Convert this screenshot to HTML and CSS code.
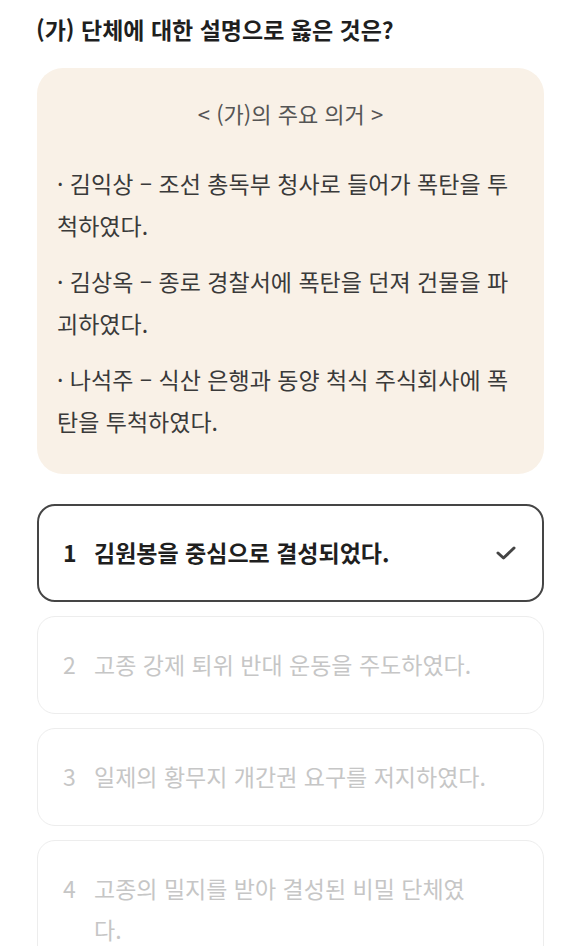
FILE: index.html
```html
<!DOCTYPE html>
<html lang="ko">
<head>
  <meta charset="UTF-8" />
  <meta name="viewport" content="width=device-width, initial-scale=1.0"/>
  <title>문제</title>
  <link rel="stylesheet" href="styles.css">
</head>
<body>
  <div class="quiz">
    <h2 class="question">(가) 단체에 대한 설명으로 옳은 것은?</h2>

    <div class="source">
      <p class="source-title">&lt; (가)의 주요 의거 &gt;</p>
      <p class="source-item">· 김익상 – 조선 총독부 청사로 들어가 폭탄을 투척하였다.</p>
      <p class="source-item">· 김상옥 – 종로 경찰서에 폭탄을 던져 건물을 파괴하였다.</p>
      <p class="source-item">· 나석주 – 식산 은행과 동양 척식 주식회사에 폭탄을 투척하였다.</p>
    </div>

    <ul class="options">
      <li class="option selected">
        <span class="num">1</span>
        <span class="text">김원봉을 중심으로 결성되었다.</span>
        <svg class="check" width="20" height="14" viewBox="0 0 20 14">
          <path d="M2 7 L7.5 12 L18 2" fill="none" stroke="#444" stroke-width="3" stroke-linecap="round" stroke-linejoin="round"/>
        </svg>
      </li>
      <li class="option">
        <span class="num">2</span>
        <span class="text">고종 강제 퇴위 반대 운동을 주도하였다.</span>
      </li>
      <li class="option">
        <span class="num">3</span>
        <span class="text">일제의 황무지 개간권 요구를 저지하였다.</span>
      </li>
      <li class="option">
        <span class="num">4</span>
        <span class="text">고종의 밀지를 받아 결성된 비밀 단체였다.</span>
      </li>
    </ul>
  </div>
</body>
</html>
```

FILE: styles.css
```css
body {
  margin: 0;
  background: #fff;
  font-family: "Noto Sans CJK KR", "Noto Sans", sans-serif;
  color: #222;
}

.quiz {
  padding: 13px 36px 0 37px;
}

.question {
  margin: 0 0 23px -1px;
  font-size: 23px;
  font-weight: 700;
  line-height: 32px;
  color: #1f1f1f;
}

.source {
  background: #f9f1e7;
  border-radius: 26px;
  padding: 24px 20px 32px;
}

.source p {
  margin: 0;
  font-size: 23px;
  line-height: 42px;
  color: #3a3a3a;
}

.source .source-title {
  text-align: center;
  color: #555;
  font-size: 22px;
  margin-bottom: 28px;
}

.source .source-item + .source-item {
  margin-top: 14px;
}

.options {
  list-style: none;
  margin: 30px 0 0;
  padding: 0;
  display: flex;
  flex-direction: column;
  gap: 14px;
}

.option {
  display: flex;
  align-items: flex-start;
  border: 1px solid #ededed;
  border-radius: 18px;
  padding: 27px 28px 28px 25px;
  font-size: 23px;
  line-height: 41px;
  color: #c6c6c6;
}

.option .num {
  width: 31px;
  flex: none;
}

.option .text {
  flex: 1;
  padding-right: 26px;
}

.option.selected {
  border: 2px solid #454545;
  padding: 26px 26px 27px 24px;
  color: #1f1f1f;
  font-weight: 700;
}

.option.selected .text {
  padding-right: 0;
}

.check {
  flex: none;
  align-self: center;
}
```
